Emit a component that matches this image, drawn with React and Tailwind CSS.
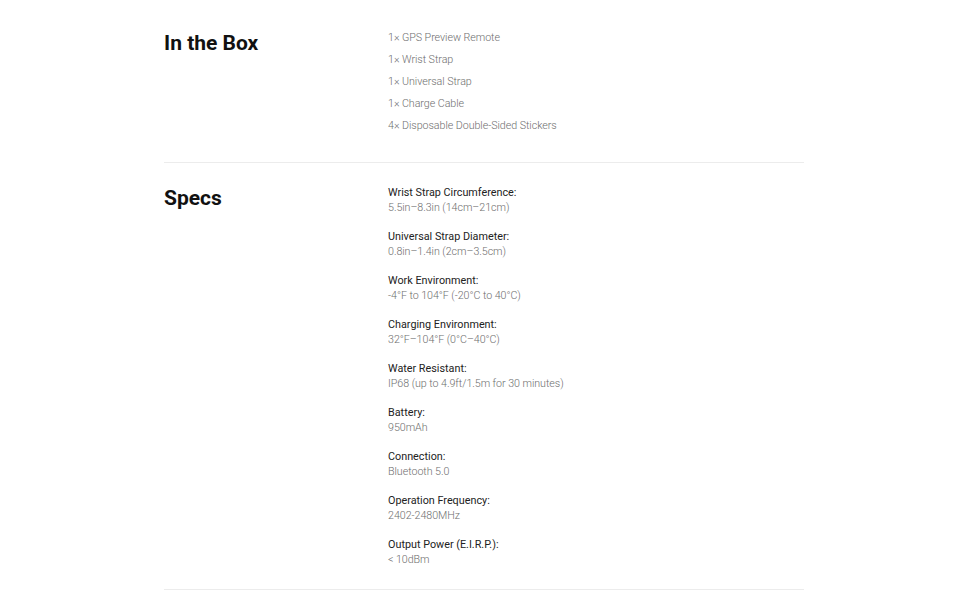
import React from 'react';

const boxItems = [
  '1× GPS Preview Remote',
  '1× Wrist Strap',
  '1× Universal Strap',
  '1× Charge Cable',
  '4× Disposable Double-Sided Stickers',
];

const specs = [
  ['Wrist Strap Circumference:', '5.5in–8.3in (14cm–21cm)'],
  ['Universal Strap Diameter:', '0.8in–1.4in (2cm–3.5cm)'],
  ['Work Environment:', '-4°F to 104°F (-20°C to 40°C)'],
  ['Charging Environment:', '32°F–104°F (0°C–40°C)'],
  ['Water Resistant:', 'IP68 (up to 4.9ft/1.5m for 30 minutes)'],
  ['Battery:', '950mAh'],
  ['Connection:', 'Bluetooth 5.0'],
  ['Operation Frequency:', '2402-2480MHz'],
  ['Output Power (E.I.R.P.):', '< 10dBm'],
];

export default function App() {
  return (
    <div className="min-h-screen bg-white font-['Roboto',sans-serif]">
      <div className="ml-[164px] w-[640px]">
        {/* In the Box */}
        <section className="flex border-b border-[#ececec] pt-[27px] pb-[25px]">
          <h2 className="w-[224px] shrink-0 mt-[2px] text-[21px] leading-[28px] font-bold text-[#111]">
            In the Box
          </h2>
          <ul className="text-[10.7px] leading-[22px] font-light tracking-[-0.05px] text-[#6e6e6e]">
            {boxItems.map((item) => (
              <li key={item}>{item}</li>
            ))}
          </ul>
        </section>

        {/* Specs */}
        <section className="flex border-b border-[#ececec] pt-[22px] pb-[22px]">
          <h2 className="w-[224px] shrink-0 text-[21px] leading-[26px] font-bold text-[#111]">
            Specs
          </h2>
          <div className="flex flex-col gap-[14px] leading-[15px]">
            {specs.map(([label, value]) => (
              <div key={label}>
                <div className="text-[10.8px] font-normal text-[#222]">{label}</div>
                <div className="text-[10.7px] font-light tracking-[-0.05px] text-[#6e6e6e]">{value}</div>
              </div>
            ))}
          </div>
        </section>
      </div>
    </div>
  );
}
